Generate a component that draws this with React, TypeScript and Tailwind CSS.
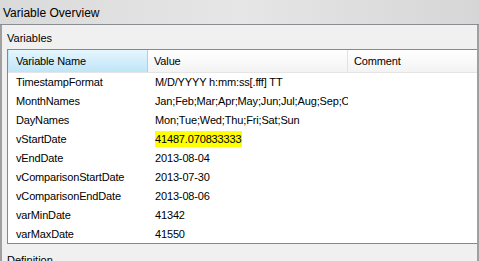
import React from 'react';

interface VariableRow {
  name: string;
  value: string;
  comment?: string;
  highlight?: boolean;
}

const rows: VariableRow[] = [
  { name: 'TimestampFormat', value: 'M/D/YYYY h:mm:ss[.fff] TT' },
  { name: 'MonthNames', value: 'Jan;Feb;Mar;Apr;May;Jun;Jul;Aug;Sep;Oct;Nov;Dec' },
  { name: 'DayNames', value: 'Mon;Tue;Wed;Thu;Fri;Sat;Sun' },
  { name: 'vStartDate', value: '41487.070833333', highlight: true },
  { name: 'vEndDate', value: '2013-08-04' },
  { name: 'vComparisonStartDate', value: '2013-07-30' },
  { name: 'vComparisonEndDate', value: '2013-08-06' },
  { name: 'varMinDate', value: '41342' },
  { name: 'varMaxDate', value: '41550' },
];

const App: React.FC = () => {
  return (
    <div
      className="w-[479px] h-[261px] overflow-hidden bg-[#f0f0f0] text-[11px] text-black flex flex-col"
      style={{ fontFamily: '"Liberation Sans", Arial, sans-serif' }}
    >
      {/* title bar */}
      <div className="h-[25px] shrink-0 flex items-center pl-[3px] pt-[1px] text-[12px] border-b border-[#8a8d92] bg-gradient-to-r from-[#dadada] via-[#e6e6e6] to-[#d6d6d6]">
        Variable Overview
      </div>

      <div className="flex-1 flex flex-col border-l-2 border-r-2 border-[#a0a0a0] min-h-0">
        <div className="h-[24px] shrink-0 flex items-end pb-[3px] pl-[5px]">Variables</div>

        {/* list view */}
        <div className="ml-[5px] h-[195px] shrink-0 bg-white border-l border-t border-b border-[#828790] flex flex-col overflow-hidden tracking-[-0.15px]">
          <div className="h-[23px] shrink-0 flex border-b border-[#e5e5e5] bg-gradient-to-b from-white to-[#f3f3f3]">
            <div className="w-[140px] shrink-0 flex items-center pl-[7px] border-r border-[#9fd5f2] bg-gradient-to-b from-[#e6f6fd] to-[#bfe5f8] border-l border-l-[#c5e8f8]">
              Variable Name
            </div>
            <div className="w-[200px] shrink-0 flex items-center pl-[6px] border-r border-[#e3e3e3]">
              Value
            </div>
            <div className="flex-1 flex items-center pl-[6px]">Comment</div>
          </div>

          {rows.map((row) => (
            <div key={row.name} className="h-[19px] shrink-0 flex items-center">
              <div className="w-[140px] shrink-0 pl-[8px] whitespace-nowrap overflow-hidden">{row.name}</div>
              <div className="w-[200px] shrink-0 pl-[7px] pr-[3px] whitespace-nowrap overflow-hidden">
                {row.highlight ? (
                  <span className="inline-block bg-[#ffff00] leading-[16px] pr-[1px]">{row.value}</span>
                ) : (
                  row.value
                )}
              </div>
              <div className="flex-1 pl-[6px]">{row.comment ?? ''}</div>
            </div>
          ))}
        </div>

        <div className="pl-[5px] pt-[8px]">Definition</div>
      </div>
    </div>
  );
};

export default App;
